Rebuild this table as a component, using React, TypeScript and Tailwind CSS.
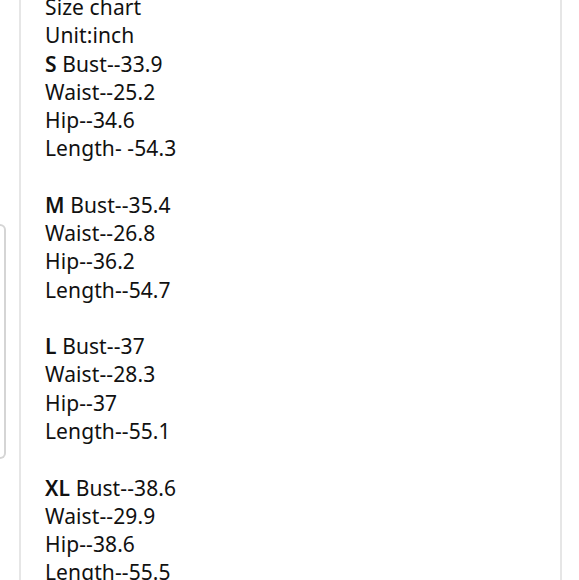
import React from 'react';

type SizeRow = { size: string; bust: string; waist: string; hip: string; length: string };

const sizes: SizeRow[] = [
  { size: 'S', bust: '33.9', waist: '25.2', hip: '34.6', length: '- -54.3' },
  { size: 'M', bust: '35.4', waist: '26.8', hip: '36.2', length: '--54.7' },
  { size: 'L', bust: '37', waist: '28.3', hip: '37', length: '--55.1' },
  { size: 'XL', bust: '38.6', waist: '29.9', hip: '38.6', length: '--55.5' },
];

const App: React.FC = () => {
  return (
    <div className="w-[579px] h-[580px] overflow-hidden bg-white flex">
      {/* 왼쪽 잘린 카드 */}
      <div className="w-[19px] shrink-0">
        <div className="mt-[224px] h-[235px] w-[6px] border-r-2 border-y-2 border-[#d5d5d5] rounded-r-[6px]" />
      </div>

      {/* 본문 패널 */}
      <div
        className="w-[543px] shrink-0 border-x-2 border-[#e6e6e6] pl-[24px] text-[#111111] text-[21px] leading-[28.27px] tracking-[0.1px]"
        style={{ fontFamily: '"Noto Sans", "Open Sans", sans-serif' }}
      >
        <div className="-mt-[7px]">
          <p>Size chart</p>
          <p>Unit:inch</p>
          {sizes.map((s, i) => (
            <div key={s.size} className={i > 0 ? 'mt-[28.27px]' : ''}>
              <p>
                <span className="font-semibold">{s.size}</span> Bust--{s.bust}
              </p>
              <p>Waist--{s.waist}</p>
              <p>Hip--{s.hip}</p>
              <p>Length{s.length}</p>
            </div>
          ))}
        </div>
      </div>
    </div>
  );
};

export default App;
